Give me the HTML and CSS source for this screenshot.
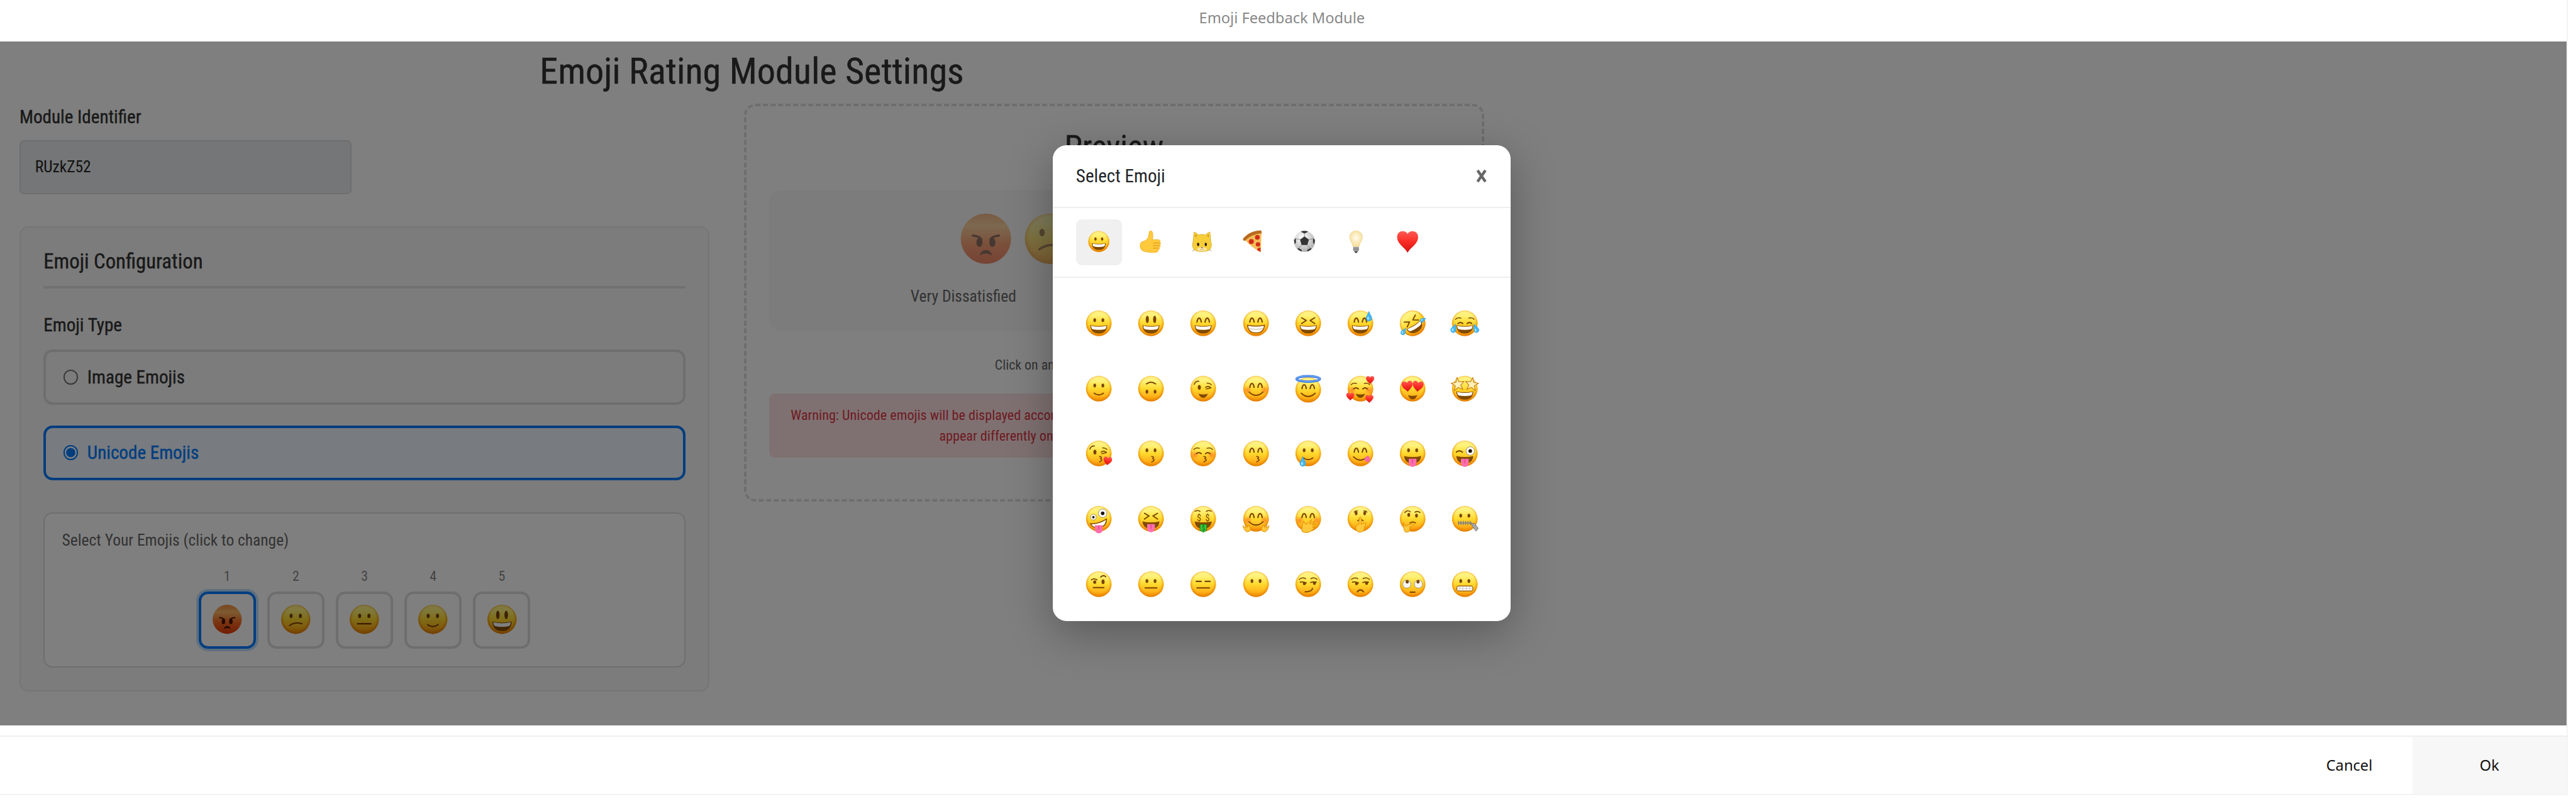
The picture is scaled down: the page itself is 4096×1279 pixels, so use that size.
FILE: index.html
```html
<!DOCTYPE html>
<html lang="en">
<head>
    <meta charset="UTF-8">
    <title>Emoji Feedback Module</title>
    <link rel="stylesheet" href="styles.css">
</head>
<body>

    <!-- Shared gradients -->
    <svg class="defs" aria-hidden="true">
        <defs>
            <linearGradient id="gFace" x1="0" y1="0" x2="0" y2="1">
                <stop offset="0" stop-color="#fff08a"/>
                <stop offset=".2" stop-color="#fff278"/>
                <stop offset=".5" stop-color="#ffd92e"/>
                <stop offset=".78" stop-color="#ffb51c"/>
                <stop offset="1" stop-color="#f28a00"/>
            </linearGradient>
            <radialGradient id="gEdge" cx=".5" cy=".46" r=".54">
                <stop offset=".74" stop-color="#f39200" stop-opacity="0"/>
                <stop offset="1" stop-color="#e07c00" stop-opacity=".95"/>
            </radialGradient>
            <linearGradient id="gAngry" x1="0" y1="0" x2="0" y2="1">
                <stop offset="0" stop-color="#f08a3c"/>
                <stop offset=".25" stop-color="#fbb765"/>
                <stop offset=".6" stop-color="#f56a22"/>
                <stop offset="1" stop-color="#e63a0a"/>
            </linearGradient>
            <radialGradient id="gBlush">
                <stop offset="0" stop-color="#ff5a2a" stop-opacity=".6"/>
                <stop offset="1" stop-color="#ff6a2a" stop-opacity="0"/>
            </radialGradient>
            <linearGradient id="gHeart" x1="0" y1="0" x2="0" y2="1">
                <stop offset="0" stop-color="#ff5a55"/>
                <stop offset=".5" stop-color="#fa2c25"/>
                <stop offset="1" stop-color="#cf1414"/>
            </linearGradient>
            <radialGradient id="gBulb" cx=".5" cy=".45" r=".55">
                <stop offset="0" stop-color="#fffdf0"/>
                <stop offset="1" stop-color="#f7dc94"/>
            </radialGradient>
            <radialGradient id="gBall" cx=".4" cy=".3" r=".75">
                <stop offset="0" stop-color="#ffffff"/>
                <stop offset="1" stop-color="#a9a9a9"/>
            </radialGradient>
        </defs>
    </svg>

    <div class="dialog">
        <div class="dialog-title">Emoji Feedback Module</div>

        <div class="dialog-body">
            <div class="settings">
                <h1>Emoji Rating Module Settings</h1>
                <div class="columns">
                    <div class="left">
                        <label class="label" for="moduleId">Module Identifier</label>
                        <input class="module-id" type="text" id="moduleId" value="RUzkZ52" readonly>

                        <div class="panel">
                            <h2>Emoji Configuration</h2>
                            <div class="label">Emoji Type</div>
                            <div class="option"><span class="radio"></span>Image Emojis</div>
                            <div class="option selected"><span class="radio"></span>Unicode Emojis</div>

                            <div class="chooser">
                                <div class="chooser-title">Select Your Emojis (click to change)</div>
                                <div class="slots">
                                    <div class="slot active"><span>1</span><div class="slot-box" data-emoji="angry"></div></div>
                                    <div class="slot"><span>2</span><div class="slot-box" data-emoji="confused"></div></div>
                                    <div class="slot"><span>3</span><div class="slot-box" data-emoji="neutral"></div></div>
                                    <div class="slot"><span>4</span><div class="slot-box" data-emoji="smile"></div></div>
                                    <div class="slot"><span>5</span><div class="slot-box" data-emoji="smiley"></div></div>
                                </div>
                            </div>
                        </div>
                    </div>

                    <div class="preview">
                        <h2>Preview</h2>
                        <div class="rating">
                            <div class="rating-row">
                                <span data-emoji="angry"></span>
                                <span data-emoji="confused"></span>
                                <span data-emoji="neutral"></span>
                                <span data-emoji="smile"></span>
                                <span data-emoji="smiley"></span>
                            </div>
                            <div class="rating-labels">
                                <span>Very Dissatisfied</span>
                                <span>Very Satisfied</span>
                            </div>
                        </div>
                        <p class="hint">Click on an emoji to test the rating modules.</p>
                        <p class="warning"><b>Warning:</b> Unicode emojis will be displayed according to the user's operating system and browser settings, so they may<br>appear differently on different devices, platforms and browsers.</p>
                    </div>
                </div>
            </div>

            <!-- Emoji picker -->
            <div class="overlay">
                <div class="modal">
                    <div class="modal-header">
                        <span>Select Emoji</span>
                        <svg class="close" viewBox="0 0 19 22"><path d="M2.6 1 16.4 21M16.4 1 2.6 21"/></svg>
                    </div>
                    <div class="tabs">
                        <span class="tab active" data-emoji="grinning"></span>
                        <span class="tab" data-emoji="thumb"></span>
                        <span class="tab" data-emoji="cat"></span>
                        <span class="tab" data-emoji="pizza"></span>
                        <span class="tab" data-emoji="ball"></span>
                        <span class="tab" data-emoji="bulb"></span>
                        <span class="tab" data-emoji="heart"></span>
                    </div>
                    <div class="grid" id="grid"></div>
                </div>
            </div>
        </div>

        <div class="dialog-footer">
            <button class="btn">Cancel</button>
            <button class="btn ok">Ok</button>
        </div>
    </div>

    <script src="emojis.js"></script>
</body>
</html>
```
FILE: styles.css
```css
/* 1rem = 100 design units */
html {
    font-size: 90.98px;
}

* {
    box-sizing: border-box;
}

body {
    margin: 0;
    background: #fff;
    font-family: "Roboto Condensed", Roboto, sans-serif;
    font-stretch: 75%;
    color: #333;
}

h1, h2, p {
    margin: 0;
    font-weight: 400;
}

h1, h2, .label, .option {
    -webkit-text-stroke: 0.4px currentColor;
}

.defs {
    position: absolute;
    width: 0;
    height: 0;
}

.dialog {
    width: 44.88rem;
    height: 13.9rem;
    display: flex;
    flex-direction: column;
    border-right: 2px solid #f3f3f3;
    border-bottom: 2px solid #f3f3f3;
}

.dialog-title {
    height: 0.72rem;
    flex: none;
    padding-right: 0.05rem;
    font-family: "Noto Sans", sans-serif;
    font-stretch: normal;
    font-size: 0.26rem;
    line-height: 0.62rem;
    text-align: center;
    color: #888;
}

.dialog-body {
    position: relative;
    height: 11.96rem;
    flex: none;
}

.settings {
    width: 26.28rem;
    padding: 0 0.34rem;
}

h1 {
    height: 1.09rem;
    font-size: 0.64rem;
    line-height: 1.05rem;
    text-align: center;
}

.columns {
    display: flex;
    align-items: flex-start;
    justify-content: space-between;
}

.left {
    width: 12.06rem;
    padding-top: 0.02rem;
}

.label {
    display: block;
    font-size: 0.32rem;
    line-height: 0.44rem;
    font-weight: 430;
}

.module-id {
    display: block;
    width: 5.8rem;
    height: 0.94rem;
    margin-top: 0.185rem;
    padding: 0 0.25rem 0.02rem;
    border: 2px solid #ddd;
    border-radius: 0.08rem;
    background: #e9ecef;
    font: inherit;
    font-size: 0.28rem;
    color: #222;
}

.panel {
    margin-top: 0.56rem;
    height: 8.14rem;
    padding: 0.3rem 0.4rem;
    border: 2px solid #ebebeb;
    border-radius: 0.16rem;
    background: #f9f9f9;
}

.panel h2 {
    height: 0.77rem;
    margin-bottom: 0.42rem;
    border-bottom: 4px solid #e3e3e3;
    font-size: 0.36rem;
    line-height: 0.6rem;
    font-weight: 430;
}

.option {
    display: flex;
    align-items: center;
    gap: 0.16rem;
    height: 0.96rem;
    margin-top: 0.36rem;
    padding-left: 0.3rem;
    border: 4px solid #ddd;
    border-radius: 0.16rem;
    font-size: 0.32rem;
    font-weight: 430;
}

.label + .option {
    margin-top: 0.21rem;
}

.option.selected {
    border-color: #007bff;
    background: #f0f7ff;
    color: #007bff;
}

.radio {
    width: 0.26rem;
    height: 0.26rem;
    border: 2px solid #767676;
    border-radius: 50%;
}

.selected .radio {
    border-color: #007bff;
    background: radial-gradient(circle, #007bff 0 0.075rem, #fff 0.085rem);
}

.chooser {
    height: 2.72rem;
    margin-top: 0.56rem;
    padding: 0.24rem 0.3rem;
    border: 2px solid #ddd;
    border-radius: 0.16rem;
    background: #fff;
}

.chooser-title {
    font-size: 0.28rem;
    line-height: 0.46rem;
    color: #666;
}

.slots {
    display: flex;
    justify-content: center;
    gap: 0.2rem;
    margin-top: 0.24rem;
}

.slot {
    display: flex;
    flex-direction: column;
    align-items: center;
    font-size: 0.24rem;
    line-height: 0.32rem;
    color: #888;
}

.slot-box {
    display: flex;
    align-items: center;
    justify-content: center;
    width: 1rem;
    height: 1rem;
    margin-top: 0.11rem;
    padding-bottom: 0.03rem;
    border: 4px solid #ddd;
    border-radius: 0.16rem;
}

.slot.active .slot-box {
    border-color: #007bff;
    box-shadow: 0 0 0 4px rgba(0, 123, 255, 0.25);
}

.slot-box .emoji {
    width: 0.555rem;
    height: 0.555rem;
}

/* Preview */
.preview {
    width: 12.94rem;
    height: 6.96rem;
    padding: 0.4rem;
    border: 4px dashed #ddd;
    border-radius: 0.2rem;
    text-align: center;
}

.preview h2 {
    font-size: 0.56rem;
    line-height: 0.66rem;
    font-weight: 450;
}

.rating {
    height: 2.47rem;
    margin-top: 0.41rem;
    padding: 0.37rem 1.6rem 0;
    border-radius: 0.2rem;
    background: #f8f8f8;
}

.rating-row {
    display: flex;
    justify-content: center;
    gap: 0.16rem;
    opacity: 0.6;
}

.rating-row .emoji {
    display: block;
    width: 0.96rem;
    height: 0.96rem;
}

.rating-labels {
    display: flex;
    justify-content: space-between;
    margin-top: 0.28rem;
    padding: 0 0.87rem;
    font-size: 0.28rem;
    line-height: 0.5rem;
    color: #666;
}

.hint {
    margin-top: 0.42rem;
    font-size: 0.24rem;
    line-height: 0.36rem;
    color: #666;
}

.warning {
    height: 1.12rem;
    margin-top: 0.31rem;
    padding: 0.2rem 0;
    border-radius: 0.1rem;
    background: #ffe3e3;
    font-size: 0.244rem;
    line-height: 0.36rem;
    white-space: nowrap;
    color: #dc3545;
}

.warning b {
    font-weight: 450;
}

/* Modal */
.overlay {
    position: absolute;
    inset: 0;
    display: flex;
    align-items: center;
    justify-content: center;
    background: rgba(0, 0, 0, 0.5);
    overflow: hidden;
}

.modal {
    width: 8rem;
    height: 8.32rem;
    margin-right: 0.05rem;
    overflow: hidden;
    border-radius: 0.24rem;
    background: #fff;
    box-shadow: 0 0.2rem 0.8rem rgba(0, 0, 0, 0.3);
}

.modal-header {
    display: flex;
    align-items: center;
    justify-content: space-between;
    height: 1.1rem;
    padding: 0 0.42rem 0 0.4rem;
    border-bottom: 2px solid #eee;
    font-size: 0.32rem;
    color: #212529;
}

.close {
    width: 0.19rem;
    height: 0.22rem;
    overflow: visible;
    fill: none;
    stroke: #666;
    stroke-width: 4.8;
}

.tabs {
    display: flex;
    gap: 0.1rem;
    height: 1.22rem;
    padding: 0.2rem 0.4rem;
    border-bottom: 2px solid #eee;
}

.tab {
    display: flex;
    align-items: center;
    justify-content: center;
    width: 0.8rem;
    height: 0.8rem;
    padding-bottom: 0.04rem;
    border-radius: 0.1rem;
}

.tab.active {
    background: #f0f0f0;
}

.tab .emoji {
    width: 0.4rem;
    height: 0.4rem;
}

.grid {
    display: grid;
    grid-template-columns: repeat(8, 0.913rem);
    grid-auto-rows: 1.14rem;
    padding: 0.22rem 0.347rem 0;
}

.grid span {
    display: flex;
    align-items: center;
    justify-content: center;
}

.grid .emoji {
    width: 0.487rem;
    height: 0.487rem;
}

.emoji {
    display: block;
    overflow: visible;
}

/* Footer */
.dialog-footer {
    display: flex;
    justify-content: flex-end;
    height: 1.02rem;
    margin-top: 0.18rem;
    border-top: 2px solid #eee;
}

.btn {
    width: 2.06rem;
    margin-right: 0.07rem;
    padding: 0;
    border: 0;
    background: #fff;
    font-family: "Noto Sans", sans-serif;
    font-size: 0.26rem;
    color: #111;
}

.btn.ok {
    width: 2.7rem;
    margin-right: 0;
    background: #f7f7f7;
}
```
FILE: emojis.js
```js
// Every emoji is put together from small SVG parts on a 72x72 grid
var line = function (d, w) {
    return '<path d="' + d + '" fill="none" stroke="#7a4300" stroke-width="' + (w || 3) + '" stroke-linecap="round" stroke-linejoin="round"/>';
};
var dot = function (x, y, rx, ry) {
    return '<ellipse cx="' + x + '" cy="' + y + '" rx="' + rx + '" ry="' + ry + '" fill="#7a4300"/>';
};
var group = function (t, s) {
    return '<g transform="' + t + '">' + s + '</g>';
};
var heart = function (t) {
    return '<path transform="' + t + '" d="M0 -6C-3 -13 -14 -12 -13 -2C-12 6 -4 10 0 15C4 10 12 6 13 -2C14 -12 3 -13 0 -6Z" fill="url(#gHeart)"/>';
};
var drop = function (t) {
    return '<path transform="' + t + '" d="M0 -12C2 -5 7 0 7 5A7 7 0 0 1 -7 5C-7 0 -2 -5 0 -12Z" fill="#45b8f5" stroke="#1c95dd" stroke-width="1"/>' +
        '<ellipse transform="' + t + '" cx="-2" cy="5" rx="2" ry="4" fill="#b5e8ff"/>';
};
var bigEye = function (x, y, r) {
    return '<circle cx="' + x + '" cy="' + y + '" r="' + r + '" fill="#fff" stroke="#9b8a6a" stroke-width="1.6"/><circle cx="' + x + '" cy="' + y + '" r="' + r * 0.42 + '" fill="#1c1206"/>';
};
var star = function (x) {
    return '<path transform="translate(' + x + ' 25) rotate(' + (x < 36 ? -8 : 8) + ')" d="M0 -18L4 -6L17 -5L7 3L11 15L0 8L-11 15L-7 3L-17 -5L-4 -6Z" fill="#fff0b8" stroke="#c9821a" stroke-width="2" stroke-linejoin="round"/>';
};

var face = '<circle cx="36" cy="36" r="33" fill="url(#gFace)"/><circle cx="36" cy="36" r="33" fill="url(#gEdge)"/>';
var blush = '<circle cx="14" cy="40" r="12" fill="url(#gBlush)"/><circle cx="58" cy="40" r="12" fill="url(#gBlush)"/>';

// eyes
var dots = dot(25.5, 28, 3.5, 5) + dot(46.5, 28, 3.5, 5);
var tall = dot(26.5, 26, 4, 9.5) + dot(45.5, 26, 4, 9.5);
var arch = line('M20 33Q21.5 23 25.5 23T31 33M41 33Q42.500 23 46.500 23T52 33', 3.4);
var squint = line('M19 22L31 29L19 37M53 22L41 29L53 37');
var shut = line('M18 37Q25 31 31 37M42 37Q48 31 54 37', 3) + line('M12 26Q17 20 26 23M60 26Q55 20 46 23', 2.4);
var wink = line('M42 33Q49 27 56 34L44 37M13 25Q16 16 25 17M46 22Q52 21 57 26', 2.6) + dot(26, 33, 4, 6);
var flat = line('M18 29H31M41 29H54', 3.4);
var side = line('M13 24Q20 17 29 22M43 22Q52 17 59 24', 2.6) + line('M15 31Q22 29 31 33M42 32Q49 29 57 31', 2.8) + dot(26, 35, 4, 4) + dot(52, 34, 4, 4);

// mouths
var grin = '<path d="M14 41Q36 46 58 41Q57 62.500 36 62.500Q15 62.500 14 41Z" fill="#804a00"/><path d="M16 42.500Q36 47.500 56 42.500Q55 50 52 51.500Q36 55 20 51.500Q17 50 16 42.500Z" fill="#fff"/>';
var beam = '<path d="M14 41Q36 46 58 41Q56 61 36 61Q16 61 14 41Z" fill="#fff" stroke="#8f5400" stroke-width="2.500"/>' + '<path d="M17 50Q36 54 55 50" fill="none" stroke="#b0a68e" stroke-width="1.500"/>';
var smile = line('M24 48Q36 57 48 48');
var wide = line('M18 45Q36 62 54 45');
var kiss = line('M38 44Q47 46 40 50Q49 53 38 58', 2.8);
var mouth = '<path d="M14 43Q36 48 58 43Q56 62 36 62Q16 62 14 43Z" fill="#804a00"/>';
var small = '<path d="M24 49Q36 53 48 49Q44 60 36 60Q28 60 24 49Z" fill="#804a00"/>';
var tongue = '<path d="M26 50H46V61A10 10 0 0 1 26 61Z" fill="#ff6fae"/><path d="M36 51V62" stroke="#d94384" stroke-width="2"/>';
var skin = 'fill="#ffc83a" stroke="#dd8a00" stroke-width="1.600" stroke-linejoin="round"';

var EMOJIS = {
    grinning: face + dots + grin,
    smiley: face + tall + grin,
    happy: face + arch + grin,
    beaming: face + arch + beam,
    laughing: face + squint + grin,
    sweat: face + arch + grin + drop('translate(58 18) scale(1.050)'),
    rofl: group('rotate(-32 36 36)', face + squint + group('translate(0 -1)', grin)) + drop('translate(63 27) rotate(60) scale(.7)') + drop('translate(13 57) rotate(30) scale(.8)'),
    joy: face + shut + grin + drop('translate(8 49) rotate(20) scale(.95)') + drop('translate(64 49) rotate(-20) scale(.95)'),
    smile: face + dots + smile,
    upside: face + group('rotate(180 36 36)', dots + smile),
    wink: face + wink + small,
    blush: face + blush + arch + wide,
    halo: group('translate(0 3)', face + arch + wide) + '<ellipse cx="36" cy="11" rx="30" ry="7" fill="none" stroke="#2f6fe0" stroke-width="6"/><ellipse cx="36" cy="10.500" rx="30" ry="7" fill="none" stroke="#82bcff" stroke-width="2"/>',
    hearts: face + blush + shut + small + heart('translate(61 12) scale(.8)') + heart('translate(10 55) scale(.8)') + heart('translate(59 61) scale(.8)'),
    love: face + heart('translate(22 28) rotate(-6) scale(1.080)') + heart('translate(50 28) rotate(6) scale(1.080)') + group('translate(0 4)', small),
    stars: face + group('translate(0 2)', grin) + star(18) + star(54),
    kissHeart: face + wink + kiss + heart('translate(59 54) rotate(8) scale(.85)'),
    kissing: face + dots + kiss,
    kissBlush: face + blush + shut + kiss,
    kissSmile: face + arch + kiss,
    tear: face + dots + smile + drop('translate(22 57) scale(1.050)'),
    yum: face + arch + wide + '<path d="M46 52Q52 40 58 43Q64 54 58 59Q50 60 46 52Z" fill="#f869a6"/>',
    tongue: face + dots + mouth + tongue,
    winkTongue: face + line('M14 33Q21 26 30 33', 3.2) + bigEye(50, 30, 11) + mouth + tongue,
    zany: face + bigEye(22, 32, 7.5) + bigEye(46, 22, 11) + group('rotate(-14 36 48)', '<path d="M15 44Q36 50 58 42Q54 59 37 59Q18 58 15 44Z" fill="#fff" stroke="#804a00" stroke-width="2.500"/>') + group('translate(0 3)', tongue),
    squintTongue: face + squint + mouth + tongue,
    money: face + line('M15 17Q21 13 28 17M44 17Q51 13 57 17', 2.6) + '<text x="25" y="42" font-size="23" text-anchor="middle" fill="#7a4300">$</text><text x="47" y="42" font-size="23" text-anchor="middle" fill="#7a4300">$</text>' + mouth + '<path d="M28 51H45V66L36.500 71L28 66Z" fill="#38c93c" stroke="#168a1c" stroke-width="1.500"/><text x="36.500" y="67" font-size="17" text-anchor="middle" fill="#0f6e18">$</text>',
    hug: face + blush + arch + group('translate(0 -1)', wide) + '<path d="M2 54L10 60L8 50L14 58L16 52L22 60Q23 70 13 70Q6 68 2 54Z" ' + skin + '/><path d="M70 54L62 60L64 50L58 58L56 52L50 60Q49 70 59 70Q66 68 70 54Z" ' + skin + '/>',
    giggle: face + blush + arch + '<path d="M20 69Q18 54 24 43L30 51L45 38L40 50L53 42L46 53L57 48L47 59L54 57Q44 71 33 72Q24 72 20 69Z" ' + skin + '/>',
    shush: face + line('M20 19Q23 15 28 16M45 16Q50 15 53 19', 2.4) + dot(25, 22, 3.5, 5) + dot(47, 22, 3.5, 5) + line('M29 41Q36 36 43 41', 2.8) + '<path d="M33 34Q36 29 38 34L38 51L47 46Q52 48 47 57Q47 70 34 71Q22 70 24 55L32 50Z" ' + skin + '/>',
    thinking: face + line('M16 20Q22 12 30 18M42 19Q50 15 55 20M29 47Q37 42 43 47', 2.8) + dot(26, 26, 3.5, 5) + dot(46, 28, 3.5, 5) + '<path d="M13 46L18 55L34 49Q41 49 35 55L28 58Q32 71 20 71Q11 71 13 46Z" ' + skin + '/>',
    zipper: face + dots + '<path d="M18 47H54" stroke="#8a8a8a" stroke-width="3"/><path d="M20 42V52M26 42V52M32 42V52M38 42V52M44 42V52M50 42V52" stroke="#7c7c7c" stroke-width="2.500"/><path d="M52 48L60 48L71 61L65 68L57 58Z" fill="#a8a8a8" stroke="#6b6b6b" stroke-width="1.500"/>',
    brow: face + line('M17 25Q23 20 31 25M41 18Q47 11 54 17', 3) + dot(25.5, 31, 4, 4.5) + dot(47, 30, 4, 6) + line('M22 45H49', 3.4),
    neutral: face + dots + line('M21 46H51', 3.4),
    expressionless: face + flat + line('M20 46H52', 3.4),
    noMouth: face + dots,
    smirk: face + side + line('M28 56Q46 56 47 47', 3),
    unamused: face + side + line('M28 56Q36 46 44 56', 3.4),
    rolling: face + '<circle cx="21" cy="36" r="10.500" fill="#f5f5f5" stroke="#9b8a6a" stroke-width="1.500"/><circle cx="51" cy="36" r="10.500" fill="#f5f5f5" stroke="#9b8a6a" stroke-width="1.500"/>' + dot(22, 30, 4, 4.5) + dot(50, 30, 4, 4.5) + line('M30 57H42', 3.2),
    grimace: face + dots + '<rect x="15" y="41" width="42" height="13" rx="6" fill="#fff" stroke="#8f5400" stroke-width="2"/><path d="M15 47.500H57M23 42V53M31 42V54M40 42V54M49 42V53" stroke="#aaa" stroke-width="1"/>',
    confused: face + dots + line('M22 50Q34 41 50 46', 3),
    angry: '<circle cx="36" cy="36" r="33" fill="url(#gAngry)"/>' + '<g fill="none" stroke="#4a1500" stroke-width="3" stroke-linecap="round"><path d="M19 32Q28 33 30 37M53 32Q44 33 42 37"/></g><g fill="#4a1500"><ellipse cx="27.500" cy="41" rx="4" ry="6"/><ellipse cx="44.500" cy="41" rx="4" ry="6"/><path d="M28 58Q30 51 36 51T44 58Q36 53 28 58Z"/></g>',

    thumb: '<path d="M13 36Q26 32 30 21Q32 13 32 6Q37 -2 42 6Q45 14 43 30H60Q68 31 66 37Q70 41 66 46Q69 51 64 55Q66 60 61 63Q61 68 54 70Q30 72 13 66Q2 60 4 46Q6 36 13 36Z" fill="#ffc93c" stroke="#f0a81f" stroke-width="1.500"/><path d="M45 41H65M44 49H64M45 57H61" stroke="#d98e13" stroke-width="2" fill="none"/>',
    cat: '<path d="M11 6Q19 8 25 15Q36 12 47 15Q53 8 61 6L64 36Q70 54 58 64Q36 72 14 64Q2 54 8 36Z" fill="#f6ce3a" stroke="#c8981e" stroke-width="1.200"/><path d="M15 13L20 18L15 23ZM57 13L52 18L57 23Z" fill="#c48a1c"/><ellipse cx="36" cy="60" rx="15" ry="6" fill="#ffe9a8"/>' + '<g fill="#231806"><ellipse cx="24" cy="45" rx="3.500" ry="5.500"/><ellipse cx="48" cy="45" rx="3.500" ry="5.500"/></g><path d="M32 54H40L36 58Z" fill="#866"/><path d="M29 61Q33 64 36 59Q39 64 43 61M5 66L14 62M67 66L58 62" fill="none" stroke="#977231" stroke-width="1.200"/>',
    pizza: '<path d="M5 27Q28 8 61 4L59 70Q30 55 5 27Z" fill="#f5bd58"/><path d="M3 27Q24 2 60 1L62 10Q30 13 8 34Q2 32 3 27Z" fill="#b96a20"/><g fill="#d12d18"><circle cx="29" cy="36" r="8"/><circle cx="48" cy="23" r="7.500"/><circle cx="50" cy="45" r="7"/><path d="M47 63Q49 54 58 56L58 69Z"/></g>',
    ball: '<circle cx="36" cy="36" r="33" fill="url(#gBall)"/><path d="M36 20L50 30L45 47H27L22 30ZM24 5Q36 0 48 5L36 11ZM3 31L9 25V40L5 44ZM69 31L63 25V40L67 44ZM17 57L27 62V68Q19 65 13 59ZM55 57L45 62V68Q53 65 59 59Z" fill="#333"/><path d="M36 20V11M50 30L63 27M45 47L54 58M27 47L18 58M22 30L9 27" stroke="#777" stroke-width="1.500"/>',
    bulb: '<path d="M26 52Q25 43 19 35Q12 22 19 11Q25 2 36 2T53 11Q60 22 53 35Q47 43 46 52Z" fill="url(#gBulb)" stroke="#e6cf93" stroke-width="1"/><path d="M27 53H45V65L39 71H33L27 65Z" fill="#a6a6a6"/><path d="M27 57H45M27 62H45" stroke="#777" stroke-width="2"/><path d="M31 67H41L38 72H34Z" fill="#444"/>',
    heart: '<path d="M36 12C29 -1 2 0 3 24C4 44 27 54 36 71C45 54 68 44 69 24C70 0 43 -1 36 12Z" fill="url(#gHeart)"/>'
};

var GRID = [
    'grinning', 'smiley', 'happy', 'beaming', 'laughing', 'sweat', 'rofl', 'joy',
    'smile', 'upside', 'wink', 'blush', 'halo', 'hearts', 'love', 'stars',
    'kissHeart', 'kissing', 'kissBlush', 'kissSmile', 'tear', 'yum', 'tongue', 'winkTongue',
    'zany', 'squintTongue', 'money', 'hug', 'giggle', 'shush', 'thinking', 'zipper',
    'brow', 'neutral', 'expressionless', 'noMouth', 'smirk', 'unamused', 'rolling', 'grimace'
];

GRID.forEach(function (name) {
    var cell = document.createElement('span');
    cell.dataset.emoji = name;
    document.getElementById('grid').appendChild(cell);
});

document.querySelectorAll('[data-emoji]').forEach(function (el) {
    el.innerHTML = '<svg class="emoji" viewBox="0 0 72 72">' + EMOJIS[el.dataset.emoji] + '</svg>';
});
```
